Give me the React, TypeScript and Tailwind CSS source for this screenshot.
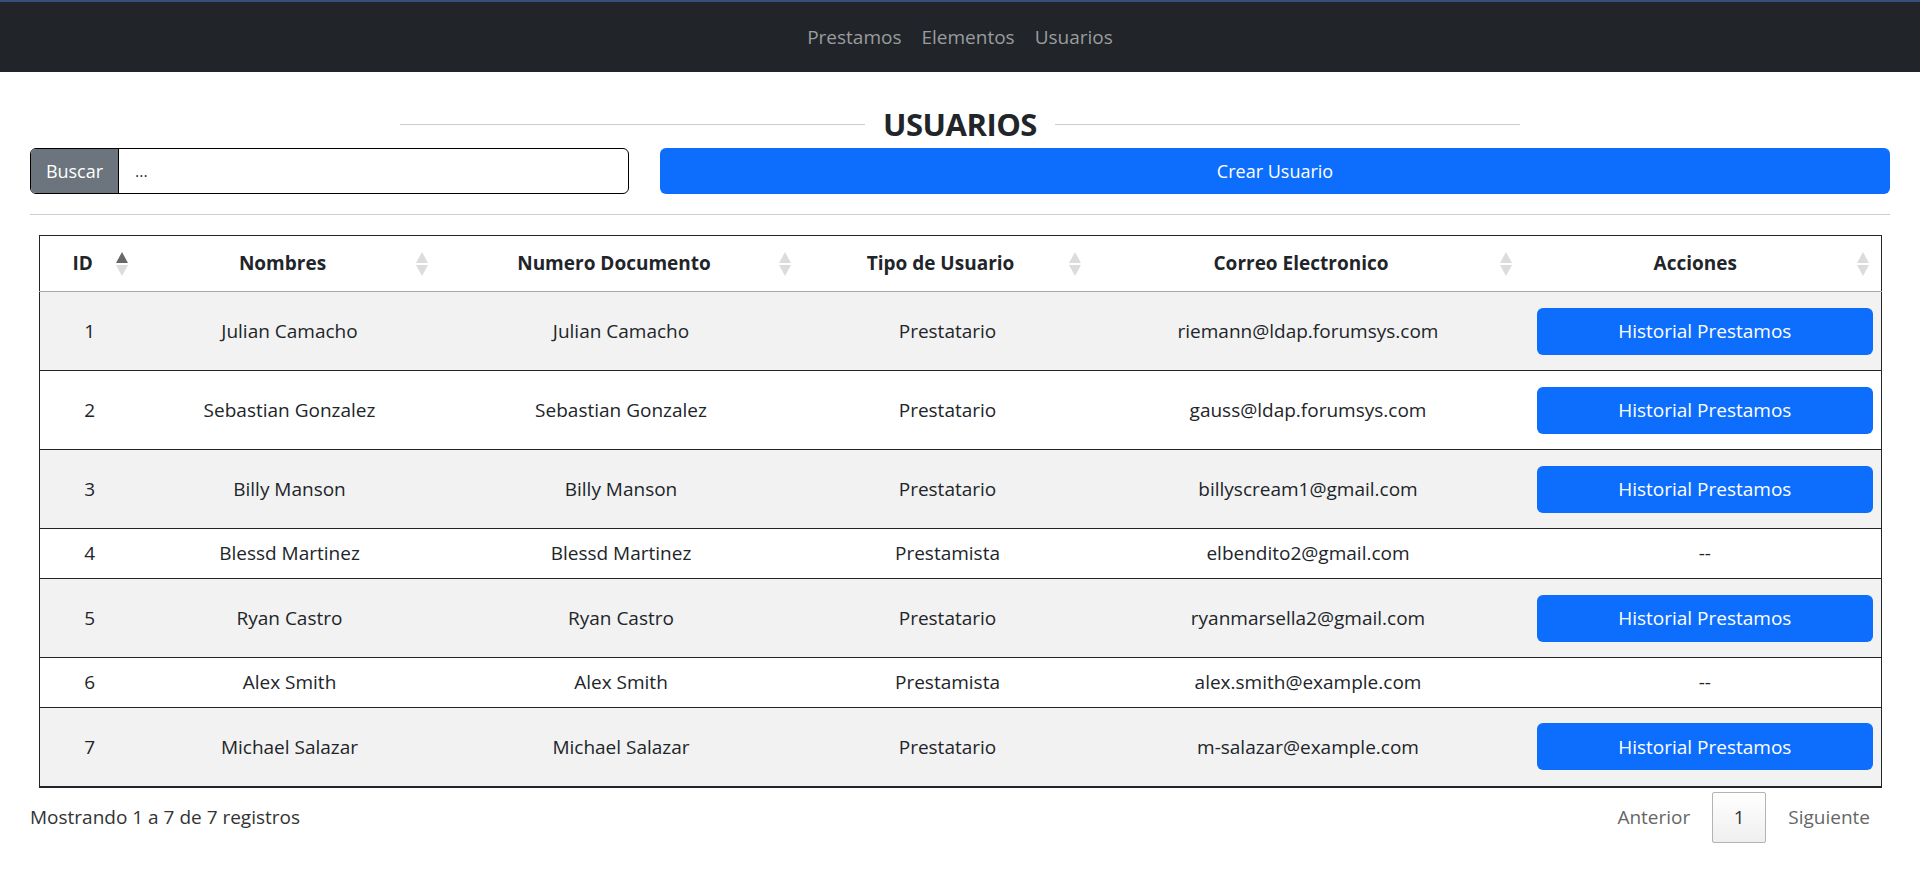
import React from "react";

type Usuario = {
  id: number;
  nombre: string;
  tipo: "Prestatario" | "Prestamista";
  correo: string;
};

const USUARIOS: Usuario[] = [
  { id: 1, nombre: "Julian Camacho", tipo: "Prestatario", correo: "riemann@ldap.forumsys.com" },
  { id: 2, nombre: "Sebastian Gonzalez", tipo: "Prestatario", correo: "gauss@ldap.forumsys.com" },
  { id: 3, nombre: "Billy Manson", tipo: "Prestatario", correo: "billyscream1@gmail.com" },
  { id: 4, nombre: "Blessd Martinez", tipo: "Prestamista", correo: "elbendito2@gmail.com" },
  { id: 5, nombre: "Ryan Castro", tipo: "Prestatario", correo: "ryanmarsella2@gmail.com" },
  { id: 6, nombre: "Alex Smith", tipo: "Prestamista", correo: "alex.smith@example.com" },
  { id: 7, nombre: "Michael Salazar", tipo: "Prestatario", correo: "m-salazar@example.com" },
];

const COLUMNS = [
  { label: "ID", width: "w-[100px]", active: true },
  { label: "Nombres", width: "w-[300px]", active: false },
  { label: "Numero Documento", width: "w-[363px]", active: false },
  { label: "Tipo de Usuario", width: "w-[290px]", active: false },
  { label: "Correo Electronico", width: "w-[431px]", active: false },
  { label: "Acciones", width: "w-[358px]", active: false },
];

function SortIcon({ active }: { active: boolean }) {
  return (
    <svg width="12" height="24" viewBox="0 0 12 24" className="shrink-0">
      <polygon points="6,0 12,11 0,11" fill={active ? "#686868" : "#dcdcdc"} />
      <polygon points="0,13 12,13 6,24" fill="#dcdcdc" />
    </svg>
  );
}

export default function App() {
  return (
    <div className="min-h-screen bg-white text-[#212529] font-['Open_Sans',sans-serif]">
      {/* navbar */}
      <nav className="h-[72px] bg-[#212529] border-t-2 border-[#34507a] flex items-center justify-center gap-[20px] text-[19px] text-[#9a9c9e]">
        <span>Prestamos</span>
        <span>Elementos</span>
        <span>Usuarios</span>
      </nav>

      <main className="px-[30px]">
        {/* title */}
        <div className="mx-auto w-[1120px] mt-[31px] h-[42px] flex items-center">
          <div className="flex-1 h-px bg-[#cccccc]" />
          <h4 className="mx-[18px] text-[31px] font-bold leading-none tracking-[-0.5px]">USUARIOS</h4>
          <div className="flex-1 h-px bg-[#cccccc]" />
        </div>

        {/* buscar + crear */}
        <div className="mt-[3px] grid grid-cols-[599px_1fr] gap-[31px]">
          <div className="flex h-[46px] border border-black rounded-[6px] overflow-hidden">
            <span className="w-[88px] bg-[#6c757d] text-white text-[18px] flex items-center justify-center border-r border-black">
              Buscar
            </span>
            <input
              className="flex-1 px-[16px] text-[16px] text-[#333] outline-none placeholder:text-[#333]"
              placeholder="..."
            />
          </div>
          <button className="h-[46px] rounded-[6px] bg-[#0d6efd] text-white text-[18px]">Crear Usuario</button>
        </div>

        <hr className="mt-[20px] border-t border-[#cfcfcf]" />

        {/* table */}
        <div className="mx-[9px] mt-[20px]">
          <table className="w-full table-fixed border-collapse border border-[#212529] border-b-2 text-[19px]">
            <colgroup>
              {COLUMNS.map((c) => (
                <col key={c.label} className={c.width} />
              ))}
            </colgroup>
            <thead>
              <tr className="h-[56px] border-b border-[#a9a9a9]">
                {COLUMNS.map((c) => (
                  <th key={c.label} className="pl-[10px] pr-[12px] font-bold">
                    <div className="flex items-center">
                      <span className="flex-1 text-center">{c.label}</span>
                      <SortIcon active={c.active} />
                    </div>
                  </th>
                ))}
              </tr>
            </thead>
            <tbody>
              {USUARIOS.map((u, i) => {
                const prestatario = u.tipo === "Prestatario";
                return (
                  <tr
                    key={u.id}
                    className={`border-t border-[#212529] text-center ${prestatario ? "h-[79px]" : "h-[50px]"} ${i % 2 === 0 ? "bg-[#f2f2f2]" : "bg-white"}`}
                  >
                    <td>{u.id}</td>
                    <td>{u.nombre}</td>
                    <td>{u.nombre}</td>
                    <td>{u.tipo}</td>
                    <td>{u.correo}</td>
                    <td className="pl-[13px] pr-[8px]">
                      {prestatario ? (
                        <button className="w-full h-[47px] rounded-[6px] bg-[#0d6efd] text-white text-[19px]">
                          Historial Prestamos
                        </button>
                      ) : (
                        "--"
                      )}
                    </td>
                  </tr>
                );
              })}
            </tbody>
          </table>
        </div>

        {/* footer */}
        <div className="mt-[4px] flex items-center justify-between text-[19px]">
          <span className="text-[#333]">Mostrando 1 a 7 de 7 registros</span>
          <div className="flex items-center text-[#666]">
            <span className="h-[51px] px-[20px] flex items-center">Anterior</span>
            <span className="ml-[2px] h-[51px] w-[54px] flex items-center justify-center border border-[#b3b3b3] rounded-[2px] bg-linear-to-b from-white to-[#efefef] text-[#333]">
              1
            </span>
            <span className="ml-[2px] h-[51px] px-[20px] flex items-center">Siguiente</span>
          </div>
        </div>
      </main>
    </div>
  );
}
